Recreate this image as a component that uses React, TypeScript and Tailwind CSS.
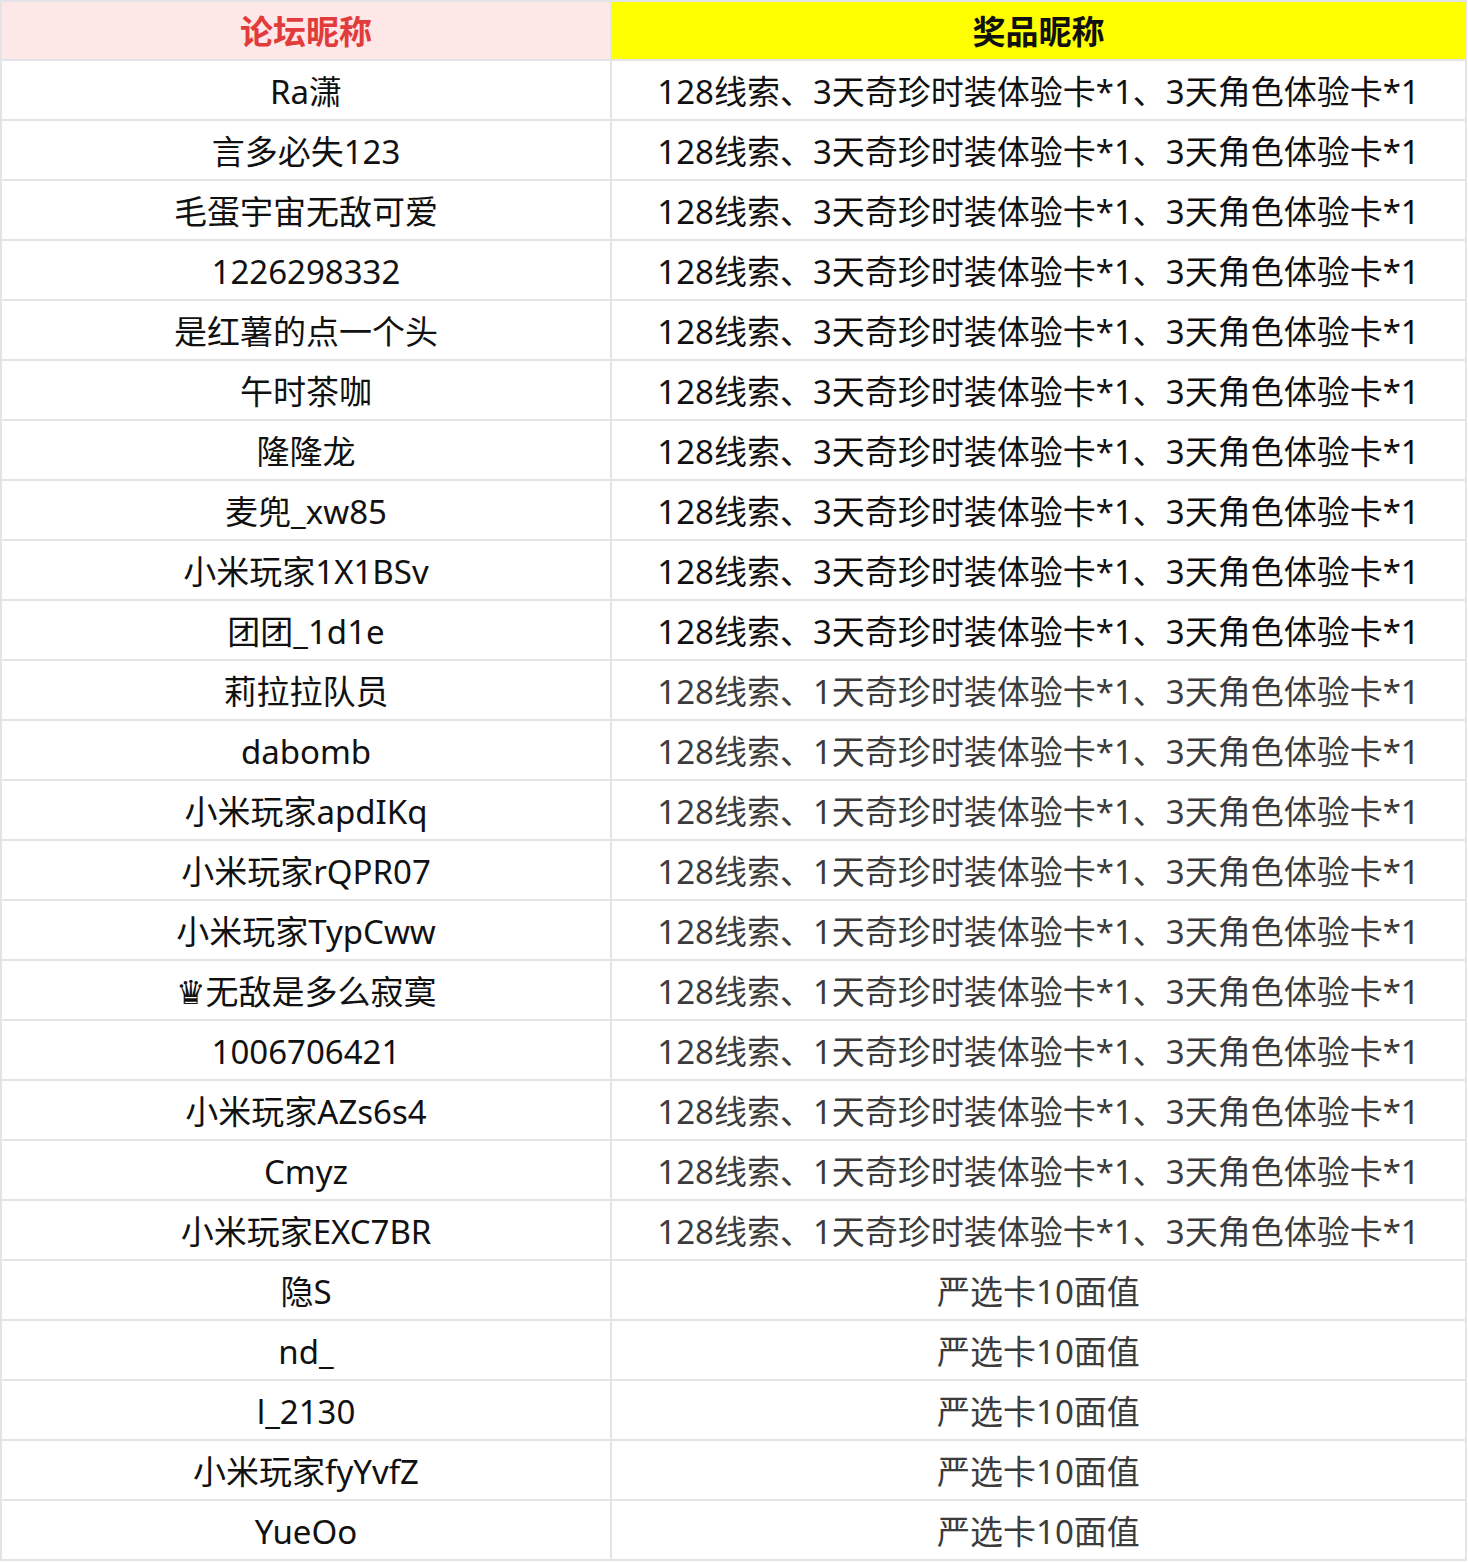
const A = "128线索、3天奇珍时装体验卡*1、3天角色体验卡*1"
const B = "128线索、1天奇珍时装体验卡*1、3天角色体验卡*1"
const C = "严选卡10面值"

const rows: [string, string, boolean][] = [
  ["Ra潇", A, false],
  ["言多必失123", A, false],
  ["毛蛋宇宙无敌可爱", A, false],
  ["1226298332", A, false],
  ["是红薯的点一个头", A, false],
  ["午时茶咖", A, false],
  ["隆隆龙", A, false],
  ["麦兜_xw85", A, false],
  ["小米玩家1X1BSv", A, false],
  ["团团_1d1e", A, false],
  ["莉拉拉队员", B, true],
  ["dabomb", B, true],
  ["小米玩家apdIKq", B, true],
  ["小米玩家rQPR07", B, true],
  ["小米玩家TypCww", B, true],
  ["♛无敌是多么寂寞", B, true],
  ["1006706421", B, true],
  ["小米玩家AZs6s4", B, true],
  ["Cmyz", B, true],
  ["小米玩家EXC7BR", B, true],
  ["隐S", C, true],
  ["nd_", C, true],
  ["l_2130", C, true],
  ["小米玩家fyYvfZ", C, true],
  ["YueOo", C, true],
]

export default function App() {
  return (
    <div className="bg-white w-[1468px] min-h-[1563px]">
      <div
        className="w-[1467px] p-[2px] bg-[#e3e4e8] grid grid-cols-[608px_1fr] gap-[2px] text-[33px] leading-none"
        style={{ fontFamily: '"Noto Sans", "Noto Sans CJK SC", sans-serif' }}
      >
        <div className="h-[57px] pt-[2px] bg-[#fde7e7] flex items-center justify-center font-bold text-[#e23b3b]">论坛昵称</div>
        <div className="h-[57px] pt-[2px] bg-[#ffff00] flex items-center justify-center font-bold text-[#111]">奖品昵称</div>
        {rows.map(([name, prize, gray], i) => (
          <div key={i} className="contents">
            <div className="h-[58px] pt-[3px] bg-white flex items-center justify-center text-[#111]">{name}</div>
            <div className={`h-[58px] pt-[3px] bg-white flex items-center justify-center ${gray ? "text-[#3c3c3c]" : "text-[#111]"}`}>{prize}</div>
          </div>
        ))}
      </div>
    </div>
  )
}
